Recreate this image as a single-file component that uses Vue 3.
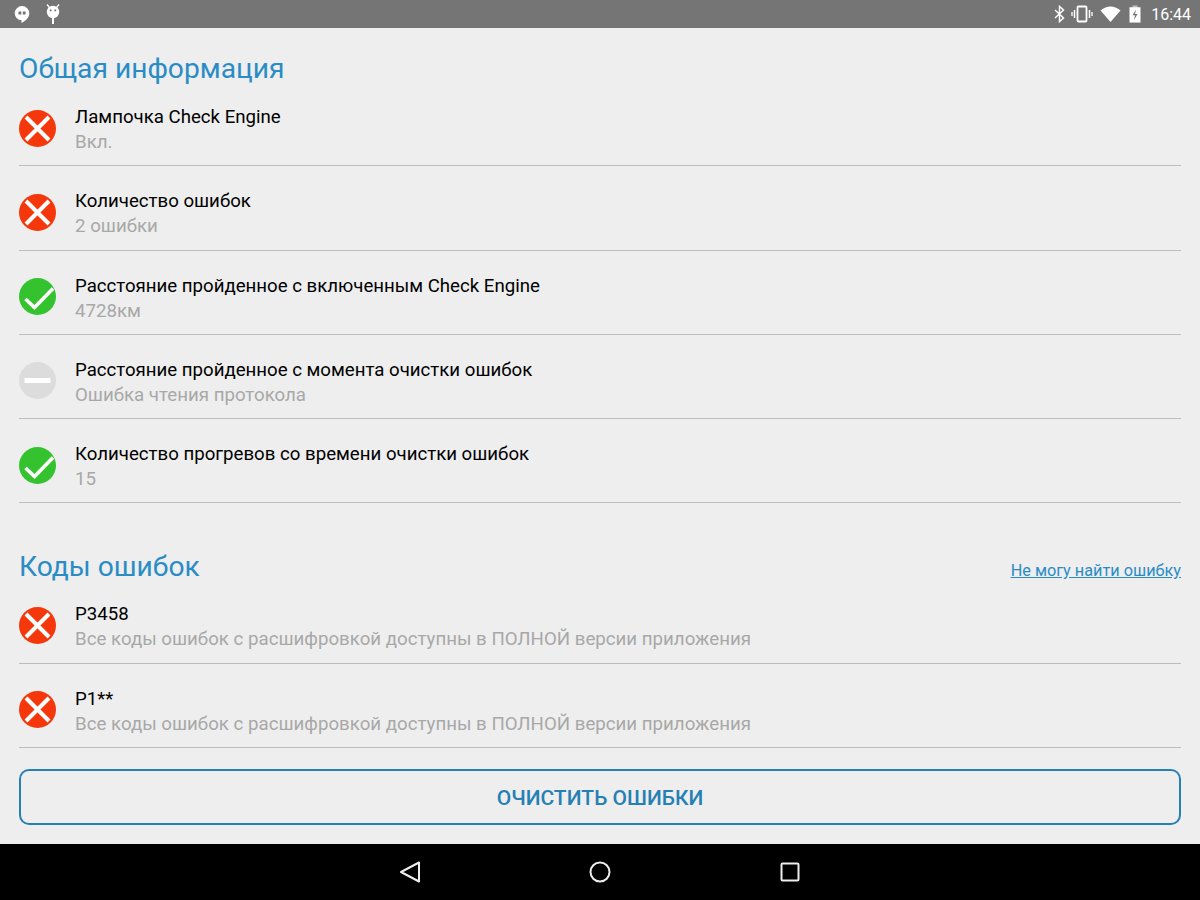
<template>
  <div class="screen">
    <div class="status-bar">
      <div class="status-left">
        <svg class="ic" width="16" height="18" viewBox="0 0 16 18">
          <path d="M8 1a7.300 7.300 0 0 0-7.300 7.300A7.200 7.200 0 0 0 7.500 15.300V18c3.700-1.800 7.800-5.100 7.800-9.700A7.300 7.300 0 0 0 8 1z" fill="#fff" />
          <rect x="4.500" y="6.500" width="2.800" height="3" fill="#757575" />
          <rect x="8.800" y="6.500" width="2.800" height="3" fill="#757575" />
        </svg>
        <svg class="ic" width="14" height="20" viewBox="0 0 14 20">
          <path d="M1 0.500l2.500 3M13 0.500l-2.500 3" stroke="#fff" stroke-width="1.300" fill="none" />
          <circle cx="7" cy="8" r="6.200" fill="#fff" />
          <rect x="3.800" y="5.500" width="1.800" height="1.800" fill="#757575" />
          <rect x="8.400" y="5.500" width="1.800" height="1.800" fill="#757575" />
          <rect x="6" y="14" width="2" height="6" fill="#fff" />
        </svg>
      </div>
      <div class="status-right">
        <svg class="bt-icon" width="11" height="18" viewBox="0 0 12 20">
          <path d="M1 5.500l9.500 9-4.500 4V1.500l4.500 4-9.500 9" stroke="#fff" stroke-width="1.600" fill="none" />
        </svg>
        <svg class="vib-icon" width="22" height="18" viewBox="0 0 22 18">
          <rect x="6.500" y="1.500" width="9" height="15" rx="1" fill="none" stroke="#fff" stroke-width="1.800" />
          <path d="M3.500 5v8M18.500 5v8" stroke="#fff" stroke-width="1.500" />
          <path d="M1 7v4M21 7v4" stroke="#fff" stroke-width="1.300" />
        </svg>
        <svg width="21" height="16" viewBox="0 0 21 16">
          <path d="M0.500 4.500Q10.500-3.500 20.500 4.500L10.500 16z" fill="#fff" />
        </svg>
        <svg width="12" height="18" viewBox="0 0 12 20" preserveAspectRatio="none">
          <rect x="3.500" y="0.500" width="5" height="3" fill="#bdbdbd" />
          <rect x="0.500" y="2.500" width="11" height="17" fill="#fff" />
          <path d="M7 5L3.500 11.500H6L5 17l3.500-7H6z" fill="#757575" />
        </svg>
        <span class="clock">16:44</span>
      </div>
    </div>

    <div class="content">
      <h2 class="heading first">Общая информация</h2>
      <div v-for="row in infoRows" :key="row.title" class="row">
        <StatusIcon :kind="row.kind" />
        <div class="row-text">
          <div class="row-title">{{ row.title }}</div>
          <div class="row-sub">{{ row.sub }}</div>
        </div>
      </div>

      <div class="heading-line">
        <h2 class="heading">Коды ошибок</h2>
        <a class="help-link">Не могу найти ошибку</a>
      </div>
      <div v-for="row in codeRows" :key="row.title" class="row">
        <StatusIcon kind="err" />
        <div class="row-text">
          <div class="row-title">{{ row.title }}</div>
          <div class="row-sub">{{ row.sub }}</div>
        </div>
      </div>

      <button class="clear-btn">ОЧИСТИТЬ ОШИБКИ</button>
    </div>

    <div class="nav-bar">
      <svg width="22" height="24" viewBox="0 0 22 24">
        <path d="M20 2.500V21.500L2 12z" fill="none" stroke="#eee" stroke-width="2" stroke-linejoin="round" />
      </svg>
      <svg width="22" height="22" viewBox="0 0 22 22">
        <circle cx="11" cy="11" r="9.500" fill="none" stroke="#eee" stroke-width="2" />
      </svg>
      <svg width="22" height="22" viewBox="0 0 22 22">
        <rect x="2.500" y="2.500" width="17" height="17" rx="1" fill="none" stroke="#eee" stroke-width="2" />
      </svg>
    </div>
  </div>
</template>

<script setup>
import { h } from 'vue'

const StatusIcon = (props) => {
  const colors = { err: '#f4380c', ok: '#34c32f', off: '#dcdcdc' }
  const marks = {
    err: 'M7.500 7.500L30.500 30.500M30.500 7.500L7.500 30.500',
    ok: 'M7 21.500L16 30L34.500 11',
    off: 'M6 19H32'
  }
  const widths = { err: 4, ok: 3.6, off: 5 }
  return h('svg', { class: 'status-icon', width: 37, height: 37, viewBox: '0.5 0.5 37 37' }, [
    h('circle', { cx: 19, cy: 19, r: 18.5, fill: colors[props.kind] }),
    h('path', { d: marks[props.kind], stroke: '#fff', 'stroke-width': widths[props.kind], fill: 'none' })
  ])
}
StatusIcon.props = ['kind']

const infoRows = [
  { kind: 'err', title: 'Лампочка Check Engine', sub: 'Вкл.' },
  { kind: 'err', title: 'Количество ошибок', sub: '2 ошибки' },
  { kind: 'ok', title: 'Расстояние пройденное с включенным Check Engine', sub: '4728км' },
  { kind: 'off', title: 'Расстояние пройденное с момента очистки ошибок', sub: 'Ошибка чтения протокола' },
  { kind: 'ok', title: 'Количество прогревов со времени очистки ошибок', sub: '15' }
]

const codeRows = [
  { title: 'P3458', sub: 'Все коды ошибок с расшифровкой доступны в ПОЛНОЙ версии приложения' },
  { title: 'P1**', sub: 'Все коды ошибок с расшифровкой доступны в ПОЛНОЙ версии приложения' }
]
</script>

<style>
html, body {
  margin: 0;
  background: #eeeeee;
}
</style>

<style scoped>
.screen {
  width: 1200px;
  height: 900px;
  display: flex;
  flex-direction: column;
  font-family: Roboto, "Liberation Sans", sans-serif;
  background: #eeeeee;
  overflow: hidden;
}

.status-bar {
  height: 28px;
  background: #757575;
  display: flex;
  justify-content: space-between;
  align-items: center;
  padding: 0 9px 0 14px;
  flex-shrink: 0;
}

.status-left {
  display: flex;
  align-items: center;
  gap: 16px;
}

.status-right {
  display: flex;
  align-items: center;
  gap: 8px;
}

.bt-icon {
  margin-right: -2px;
}

.vib-icon {
  margin-right: -1px;
}

.clock {
  color: #fff;
  font-size: 16px;
  margin-left: 2px;
}

.content {
  flex: 1;
  padding: 0 19px;
  display: flex;
  flex-direction: column;
}

.heading {
  margin: 0;
  font-size: 28.2px;
  font-weight: 400;
  line-height: 26px;
  color: #2a8cc4;
}

.heading.first {
  margin-top: 28px;
}

.heading-line {
  display: flex;
  justify-content: space-between;
  align-items: flex-end;
  margin-top: 51px;
  margin-bottom: -1px;
}

.help-link {
  font-size: 16.3px;
  color: #2a8cc4;
  text-decoration: underline;
  line-height: 20px;
  margin-bottom: -1px;
}

.row {
  height: 84.25px;
  box-sizing: border-box;
  display: flex;
  align-items: center;
  gap: 19px;
  border-bottom: 1px solid #bdbdbd;
  padding-top: 11px;
}

.status-icon {
  margin-bottom: 2px;
}

.row-text {
  display: flex;
  flex-direction: column;
  gap: 3px;
  margin-top: 1px;
}

.row-title {
  font-size: 18.65px;
  line-height: 22px;
  color: #000;
}

.row-sub {
  font-size: 18.7px;
  line-height: 22px;
  color: #a8a8a8;
}

.clear-btn {
  margin-top: 21px;
  height: 56px;
  padding-top: 3px;
  background: transparent;
  border: 2px solid #2680b4;
  border-radius: 10px;
  color: #2680b4;
  font-family: inherit;
  font-size: 21px;
  font-weight: 500;
}

.nav-bar {
  height: 56px;
  background: #000;
  display: flex;
  justify-content: center;
  align-items: center;
  gap: 168px;
  flex-shrink: 0;
}
</style>
